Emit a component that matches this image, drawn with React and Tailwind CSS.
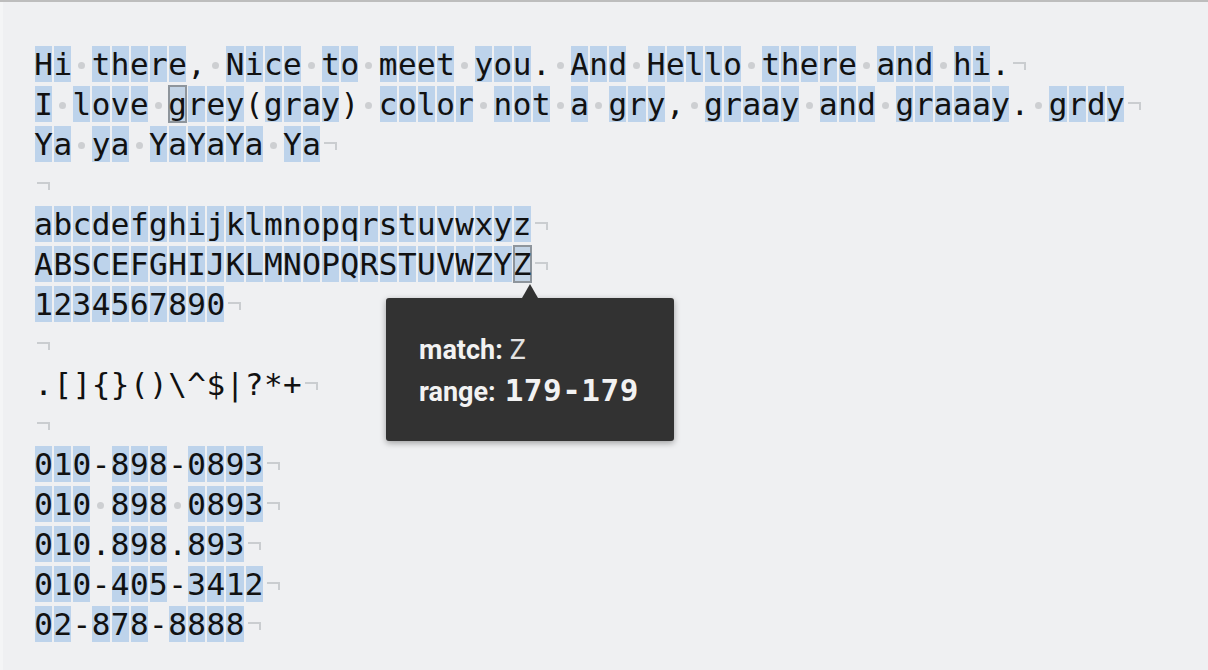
import React from 'react';

const LINES = [
  'Hi there, Nice to meet you. And Hello there and hi.',
  'I love grey(gray) color not a gry, graay and graaay. grdy',
  'Ya ya YaYaYa Ya',
  '',
  'abcdefghijklmnopqrstuvwxyz',
  'ABSCEFGHIJKLMNOPQRSTUVWZYZ',
  '1234567890',
  '',
  '.[]{}()\\^$|?*+',
  '',
  '010-898-0893',
  '010 898 0893',
  '010.898.893',
  '010-405-3412',
  '02-878-8888',
];

// cells drawn with a grey outline (line index, char index)
const OUTLINED = { '1:7': true, '5:25': true };

const mono = { fontFamily: '"DejaVu Sans Mono", "Liberation Mono", monospace' };
const sans = { fontFamily: 'Roboto, "Noto Sans", sans-serif' };

function Cell({ ch, outlined }) {
  const hit = /[A-Za-z0-9]/.test(ch);
  return (
    <span className="relative inline-flex h-[40px] w-[19.15px] shrink-0 items-center justify-center">
      {hit && !outlined && <span className="absolute inset-x-[1px] inset-y-[2px] bg-[#bdd3eb]" />}
      {outlined && <span className="absolute inset-x-0 inset-y-[1px] border-2 border-[#8e959c] bg-[#c3d4e6]" />}
      {ch === ' ' ? (
        <span className="relative mt-[2px] h-[7px] w-[7px] rounded-full bg-[#cdcfd2]" />
      ) : (
        <span className="relative leading-[40px] text-[#111]">{ch}</span>
      )}
    </span>
  );
}

function EndMark() {
  return (
    <span className="ml-[3px] flex h-[40px] items-center">
      <span className="mt-[4px] h-[8px] w-[13px] border-r-2 border-t-2 border-[#cacdd0]" />
    </span>
  );
}

function Line({ text, row }) {
  return (
    <div className="flex h-[40px] items-stretch text-[31px]" style={mono}>
      {text.split('').map((ch, i) => (
        <Cell key={i} ch={ch} outlined={OUTLINED[`${row}:${i}`]} />
      ))}
      <EndMark />
    </div>
  );
}

function Tooltip() {
  return (
    <div className="absolute left-[386px] top-[296px] h-[143px] w-[288px] rounded-[3px] bg-[#323232] pl-[33px] pt-[32px] text-[#f2f2f2] shadow-[0_2px_6px_rgba(0,0,0,0.35)]">
      <span className="absolute -top-[14px] left-[136px] h-0 w-0 border-x-[8px] border-b-[14px] border-x-transparent border-b-[#323232]" />
      <div className="h-[40px] whitespace-nowrap text-[27px] leading-[40px]" style={sans}>
        <span className="font-bold">match:</span>
        <span className="ml-[7px] font-normal text-[#e2e2e2]">Z</span>
      </div>
      <div className="h-[40px] whitespace-nowrap text-[27px] leading-[40px]" style={sans}>
        <span className="font-bold">range:</span>
        <span className="ml-[9px] text-[31px] font-bold leading-[40px] tracking-[0.5px]" style={mono}>179-179</span>
      </div>
    </div>
  );
}

export default function App() {
  return (
    <div className="relative h-[670px] w-full overflow-hidden border-t-2 border-[#bdbdbd] bg-[#eff0f2]">
      <div className="absolute inset-y-0 left-0 w-[3px] bg-[#f4f5f6]" />
      <div className="pl-[34px] pt-[42px]">
        {LINES.map((t, i) => (
          <Line key={i} text={t} row={i} />
        ))}
      </div>
      <Tooltip />
    </div>
  );
}
